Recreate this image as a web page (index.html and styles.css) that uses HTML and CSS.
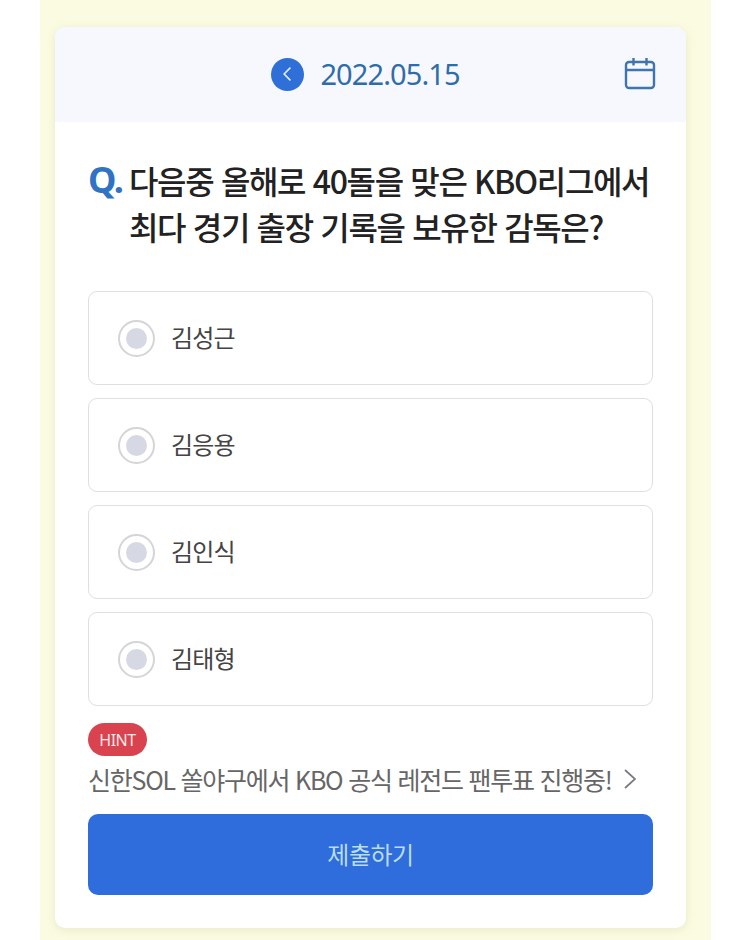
FILE: index.html
```html
<!DOCTYPE html>
<html lang="ko">
<head>
<meta charset="utf-8">
<title>Quiz</title>
<link rel="stylesheet" href="styles.css">
</head>
<body>
<div class="backdrop">
  <main class="card">
    <header class="date-bar">
      <div class="date-center">
        <span class="back-btn">
          <svg width="34" height="34" viewBox="0 0 34 34"><path d="M19.5 11 L13.5 17 L19.5 23" fill="none" stroke="#dfe9fb" stroke-width="1.8" stroke-linecap="round" stroke-linejoin="round"/></svg>
        </span>
        <span class="date-text">2022.05.15</span>
      </div>
      <svg class="cal" width="32" height="34" viewBox="0 0 32 34">
        <rect x="2" y="6" width="28" height="26" rx="3" fill="none" stroke="#3d76ad" stroke-width="2.4"/>
        <path d="M2 14 H30 M9.500 2 V9.500 M22.500 2 V9.500" fill="none" stroke="#3d76ad" stroke-width="2.400"/>
      </svg>
    </header>
    <section class="content">
      <h1 class="question">
        <span class="q-mark">Q.</span>
        <span class="q-text">다음중 올해로 40돌을 맞은 KBO리그에서<br>최다 경기 출장 기록을 보유한 감독은?</span>
      </h1>
      <ul class="options">
        <li class="option"><span class="radio"><span class="dot"></span></span><span>김성근</span></li>
        <li class="option"><span class="radio"><span class="dot"></span></span><span>김응용</span></li>
        <li class="option"><span class="radio"><span class="dot"></span></span><span>김인식</span></li>
        <li class="option"><span class="radio"><span class="dot"></span></span><span>김태형</span></li>
      </ul>
      <span class="hint-badge">HINT</span>
      <div class="hint-row">
        <span>신한SOL 쏠야구에서 KBO 공식 레전드 팬투표 진행중!</span>
        <svg width="14" height="22" viewBox="0 0 14 22"><path d="M2 2 L12 11 L2 20" fill="none" stroke="#777a80" stroke-width="1.700"/></svg>
      </div>
      <button class="submit" type="button">제출하기</button>
    </section>
  </main>
</div>
</body>
</html>
```
FILE: styles.css
```css
* { box-sizing: border-box; }
html, body { margin: 0; padding: 0; background: #fff; }
body { width: 750px; height: 940px; overflow: hidden; font-family: "Noto Sans CJK KR", "Noto Sans", sans-serif; }
.backdrop { margin: 0 39px 0 40px; height: 940px; padding: 27px 25px 12px 15px; background: #fbfbe1; }
.card { height: 901px; background: #fff; border-radius: 10px; overflow: hidden; box-shadow: 0 2px 8px rgba(200,200,170,.35); }
.date-bar { height: 95px; background: #f7f8fd; position: relative; display: flex; align-items: center; justify-content: center; }
.date-center { display: flex; align-items: center; gap: 16px; margin-right: 10px; margin-top: -1px; }
.back-btn { width: 33px; height: 33px; border-radius: 50%; background: #2f6fd8; display: flex; align-items: center; justify-content: center; }
.date-text { font-size: 29px; line-height: 36px; color: #2f6da8; letter-spacing: -.9px; font-family: "Noto Sans", sans-serif; }
.cal { position: absolute; left: 569px; top: 29px; }
.content { padding: 35px 33px 0; }
.question { margin: 0; display: flex; font-weight: 500; color: #222; font-size: 32px; line-height: 46px; letter-spacing: -1.35px; }
.q-mark { color: #2f73c4; font-weight: 700; font-size: 36px; width: 41px; flex: none; font-family: "Noto Sans", sans-serif; }
.q-text { white-space: nowrap; text-align: left; }
.options { list-style: none; margin: 42px 0 0; padding: 0; display: flex; flex-direction: column; gap: 13px; }
.option { height: 94px; border: 1.500px solid #dfdfe2; border-radius: 9px; display: flex; align-items: center; gap: 16px; padding-left: 29px; font-size: 24px; color: #444; letter-spacing: -.8px; line-height: 30px; padding-bottom: 2px; }
.radio { width: 37px; height: 37px; margin-top: 2px; border-radius: 50%; border: 2px solid #d5d5d8; background: #fff; display: flex; align-items: center; justify-content: center; }
.dot { width: 21px; height: 21px; border-radius: 50%; background: #d6d9e4; }
.hint-badge { display: inline-flex; align-items: center; justify-content: center; width: 59px; height: 33px; margin-top: 17px; border-radius: 17px; background: #d9434f; color: #fde8ea; font-size: 16px; font-family: "Noto Sans", sans-serif; letter-spacing: -.5px; }
.hint-row { display: flex; align-items: center; justify-content: space-between; width: 549px; height: 36px; margin-top: 5px; font-size: 25px; line-height: 36px; color: #666; letter-spacing: -1.250px; white-space: nowrap; }
.submit { display: block; width: 565px; height: 81px; margin-top: 17px; padding-bottom: 4px; border: 0; border-radius: 10px; background: #2e6ddb; color: #b9dcee; font-family: inherit; font-size: 24px; letter-spacing: -.5px; }
```
